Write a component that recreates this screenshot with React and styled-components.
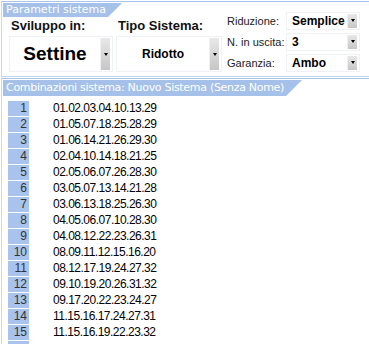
import React from 'react';
import styled, { createGlobalStyle } from 'styled-components';

const GlobalStyle = createGlobalStyle`
  html, body {
    margin: 0;
    padding: 0;
    background: #fff;
    overflow: hidden;
  }
  body {
    font-family: "Liberation Sans", Arial, sans-serif;
    color: #111;
  }
`

const Window = styled.div`
  width: 369px;
  height: 344px;
  overflow: hidden;
  background: #fff;
`

const TopPanel = styled.div`
  display: flex;
  margin: 1px 0 0 1px;
  border-top: 1px solid #aac3ea;
  border-left: 1px solid #c9d8ef;
  border-bottom: 1px solid #c3d4ee;
`

const LeftPart = styled.div`
  display: flex;
  flex-direction: column;
  padding-bottom: 4px;
`

const Tab = styled.div`
  margin: 1px 0 0 1px;
  height: ${p => p.$h}px;
  width: fit-content;
  box-sizing: border-box;
  padding: 0 ${p => p.$h + 2}px 0 3px;
  background: #a5c1ea;
  color: #fff;
  font-family: "DejaVu Sans", Verdana, sans-serif;
  font-size: 11px;
  letter-spacing: ${p => p.$ls || 0}px;
  line-height: ${p => p.$h}px;
  white-space: nowrap;
  clip-path: polygon(0 0, 100% 0, calc(100% - ${p => p.$h}px) 100%, 0 100%);
`

const Groups = styled.div`
  display: flex;
  gap: 3px;
  padding-left: 7px;
`

const Group = styled.div`
  display: flex;
  flex-direction: column;
  width: ${p => p.$w}px;
`

const GroupLabel = styled.div`
  margin-top: 1px;
  padding-left: 2px;
  height: 16px;
  font-size: 13px;
  font-weight: bold;
  line-height: 16px;
  color: #111;
  white-space: nowrap;
`

const BigCombo = styled.div`
  margin-top: 2px;
  height: 36px;
  box-sizing: border-box;
  display: flex;
  align-items: stretch;
  background: #fff;
  border: 1px solid #eef1f6;
  padding: 1px 2px 1px 0;
`

const ComboValue = styled.div`
  flex: 1;
  display: flex;
  align-items: center;
  justify-content: ${p => (p.$center ? 'center' : 'flex-start')};
  padding-left: ${p => (p.$center ? 0 : 5)}px;
  font-weight: bold;
  font-size: ${p => p.$size}px;
  color: #000;
  white-space: nowrap;
`

const DropButton = styled.div`
  width: 10px;
  display: flex;
  align-items: center;
  justify-content: center;
  background: linear-gradient(to bottom, #e8e8e8 0%, #d6d6d6 55%, #c6c6c6 100%);
  border-left: 1px solid #f0f0f0;
  box-sizing: border-box;
  &::after {
    content: '';
    width: 0;
    height: 0;
    border-left: 2.5px solid transparent;
    border-right: 2.5px solid transparent;
    border-top: 3px solid #000;
  }
`

const OptionsGrid = styled.div`
  display: grid;
  grid-template-columns: 59px 74px;
  grid-auto-rows: 21px;
  align-items: center;
  padding: 8px 0 0 5px;
`

const OptionLabel = styled.div`
  font-size: 11px;
  color: #222;
  white-space: nowrap;
`

const SmallCombo = styled.div`
  height: 18px;
  box-sizing: border-box;
  display: flex;
  align-items: stretch;
  background: #fff;
  border: 1px solid #eef1f6;
  padding: 1px 2px 1px 0;
`

const ListPanel = styled.div`
  margin: 1px 0 0 1px;
  border-top: 1px solid #a9c2ea;
  border-left: 1px solid #c9d8ef;
  height: 300px;
`

const Rows = styled.div`
  display: flex;
  flex-direction: column;
  gap: 1px;
  margin-top: 5px;
  padding-left: 6px;
`

const Row = styled.div`
  display: flex;
  align-items: center;
  height: 15px;
`

const RowNumber = styled.div`
  width: 21px;
  height: 15px;
  box-sizing: border-box;
  padding-right: 2px;
  background: #a8c3ec;
  color: #333;
  font-size: 12px;
  line-height: 15px;
  text-align: right;
`

const RowNumbers = styled.div`
  margin-left: 24px;
  font-size: 12px;
  letter-spacing: -0.5px;
  line-height: 15px;
  color: #000;
  white-space: nowrap;
`

const combinations = [
  '01.02.03.04.10.13.29',
  '01.05.07.18.25.28.29',
  '01.06.14.21.26.29.30',
  '02.04.10.14.18.21.25',
  '02.05.06.07.26.28.30',
  '03.05.07.13.14.21.28',
  '03.06.13.18.25.26.30',
  '04.05.06.07.10.28.30',
  '04.08.12.22.23.26.31',
  '08.09.11.12.15.16.20',
  '08.12.17.19.24.27.32',
  '09.10.19.20.26.31.32',
  '09.17.20.22.23.24.27',
  '11.15.16.17.24.27.31',
  '11.15.16.19.22.23.32',
]

const options = [
  { label: 'Riduzione:', value: 'Semplice' },
  { label: 'N. in uscita:', value: '3' },
  { label: 'Garanzia:', value: 'Ambo' },
]

export default function App() {
  return (
    <Window>
      <GlobalStyle />
      <TopPanel>
        <LeftPart>
          <Tab $h={14}>Parametri sistema</Tab>
          <Groups>
            <Group $w={104}>
              <GroupLabel>Sviluppo in:</GroupLabel>
              <BigCombo>
                <ComboValue $center $size={19}>Settine</ComboValue>
                <DropButton />
              </BigCombo>
            </Group>
            <Group $w={106}>
              <GroupLabel>Tipo Sistema:</GroupLabel>
              <BigCombo>
                <ComboValue $center $size={12}>Ridotto</ComboValue>
                <DropButton />
              </BigCombo>
            </Group>
          </Groups>
        </LeftPart>
        <OptionsGrid>
          {options.map(o => (
            <React.Fragment key={o.label}>
              <OptionLabel>{o.label}</OptionLabel>
              <SmallCombo>
                <ComboValue $size={12}>{o.value}</ComboValue>
                <DropButton />
              </SmallCombo>
            </React.Fragment>
          ))}
        </OptionsGrid>
      </TopPanel>
      <ListPanel>
        <Tab $h={16} $ls={-0.3}>Combinazioni sistema: Nuovo Sistema (Senza Nome)</Tab>
        <Rows>
          {combinations.map((c, i) => (
            <Row key={i}>
              <RowNumber>{i + 1}</RowNumber>
              <RowNumbers>{c}</RowNumbers>
            </Row>
          ))}
          <Row>
            <RowNumber />
          </Row>
        </Rows>
      </ListPanel>
    </Window>
  );
}
